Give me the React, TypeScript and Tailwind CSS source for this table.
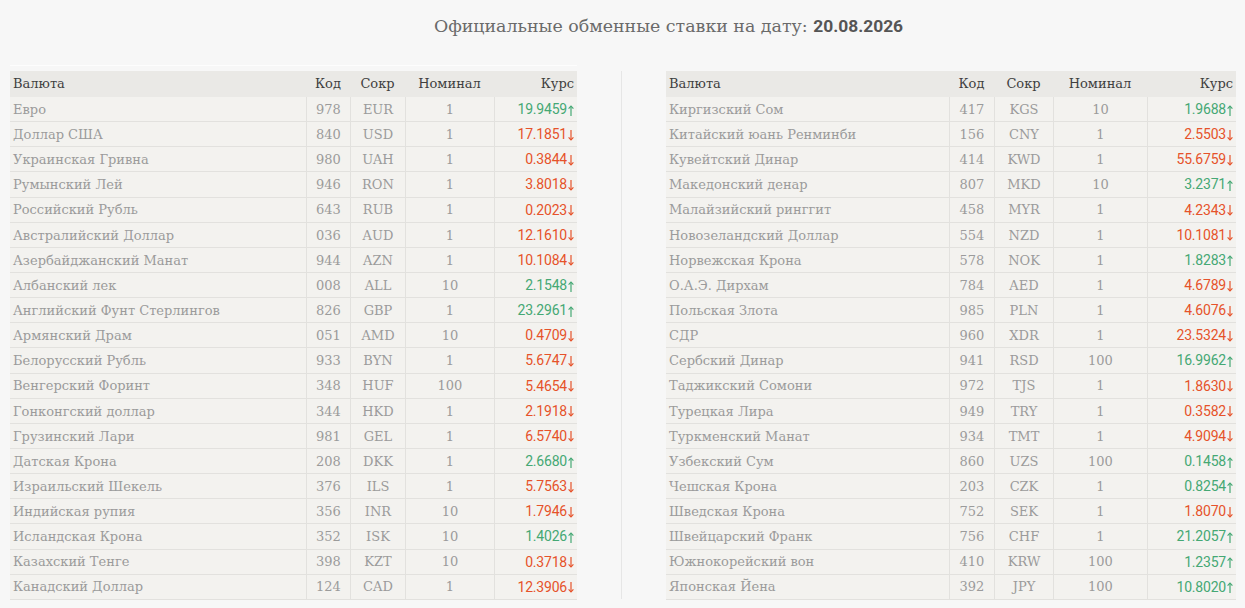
import React from "react";

type Row = [string, string, string, string, string, boolean];

const left: Row[] = [
  ["Евро", "978", "EUR", "1", "19.9459", true],
  ["Доллар США", "840", "USD", "1", "17.1851", false],
  ["Украинская Гривна", "980", "UAH", "1", "0.3844", false],
  ["Румынский Лей", "946", "RON", "1", "3.8018", false],
  ["Российский Рубль", "643", "RUB", "1", "0.2023", false],
  ["Австралийский Доллар", "036", "AUD", "1", "12.1610", false],
  ["Азербайджанский Манат", "944", "AZN", "1", "10.1084", false],
  ["Албанский лек", "008", "ALL", "10", "2.1548", true],
  ["Английский Фунт Стерлингов", "826", "GBP", "1", "23.2961", true],
  ["Армянский Драм", "051", "AMD", "10", "0.4709", false],
  ["Белорусский Рубль", "933", "BYN", "1", "5.6747", false],
  ["Венгерский Форинт", "348", "HUF", "100", "5.4654", false],
  ["Гонконгский доллар", "344", "HKD", "1", "2.1918", false],
  ["Грузинский Лари", "981", "GEL", "1", "6.5740", false],
  ["Датская Крона", "208", "DKK", "1", "2.6680", true],
  ["Израильский Шекель", "376", "ILS", "1", "5.7563", false],
  ["Индийская рупия", "356", "INR", "10", "1.7946", false],
  ["Исландская Крона", "352", "ISK", "10", "1.4026", true],
  ["Казахский Тенге", "398", "KZT", "10", "0.3718", false],
  ["Канадский Доллар", "124", "CAD", "1", "12.3906", false],
];

const right: Row[] = [
  ["Киргизский Сом", "417", "KGS", "10", "1.9688", true],
  ["Китайский юань Ренминби", "156", "CNY", "1", "2.5503", false],
  ["Кувейтский Динар", "414", "KWD", "1", "55.6759", false],
  ["Македонский денар", "807", "MKD", "10", "3.2371", true],
  ["Малайзийский ринггит", "458", "MYR", "1", "4.2343", false],
  ["Новозеландский Доллар", "554", "NZD", "1", "10.1081", false],
  ["Норвежская Крона", "578", "NOK", "1", "1.8283", true],
  ["О.А.Э. Дирхам", "784", "AED", "1", "4.6789", false],
  ["Польская Злота", "985", "PLN", "1", "4.6076", false],
  ["СДР", "960", "XDR", "1", "23.5324", false],
  ["Сербский Динар", "941", "RSD", "100", "16.9962", true],
  ["Таджикский Сомони", "972", "TJS", "1", "1.8630", false],
  ["Турецкая Лира", "949", "TRY", "1", "0.3582", false],
  ["Туркменский Манат", "934", "TMT", "1", "4.9094", false],
  ["Узбекский Сум", "860", "UZS", "100", "0.1458", true],
  ["Чешская Крона", "203", "CZK", "1", "0.8254", true],
  ["Шведская Крона", "752", "SEK", "1", "1.8070", false],
  ["Швейцарский Франк", "756", "CHF", "1", "21.2057", true],
  ["Южнокорейский вон", "410", "KRW", "100", "1.2357", true],
  ["Японская Йена", "392", "JPY", "100", "10.8020", true],
];

const serif = "font-['DejaVu_Serif',serif]";

function Arrow({ up }: { up: boolean }) {
  return (
    <svg width="6" height="11" viewBox="0 0 6 11" className="ml-[1px] mt-[1px]" fill="none" stroke="currentColor" strokeWidth="1.2">
      {up ? (
        <>
          <path d="M3 1.2V11" />
          <path d="M0.6 3.6L3 1.2L5.4 3.6" />
        </>
      ) : (
        <>
          <path d="M3 0V9.8" />
          <path d="M0.6 7.4L3 9.8L5.4 7.4" />
        </>
      )}
    </svg>
  );
}

function Table({ rows, cols }: { rows: Row[]; cols: string }) {
  return (
    <div className={`flex flex-col text-[13px] ${serif}`}>
      <div className={`grid ${cols} h-[26px] items-center bg-[#eae9e6] text-[#3f3f3f]`}>
        <div className="pl-[3px]">Валюта</div>
        <div className="text-center">Код</div>
        <div className="text-center">Сокр</div>
        <div className="text-center">Номинал</div>
        <div className="text-right pr-[3px]">Курс</div>
      </div>
      {rows.map((r) => (
        <div
          key={r[2]}
          className={`grid ${cols} h-[25.15px] bg-[#f3f2ef] border-b border-[#e2e1de] text-[#9b9b9b]`}
        >
          <div className="pl-[3px] pt-[1px] flex items-center whitespace-nowrap">{r[0]}</div>
          <div className="border-l border-[#e2e1de] pt-[1px] flex items-center justify-center">{r[1]}</div>
          <div className="border-l border-[#e2e1de] pt-[1px] flex items-center justify-center">{r[2]}</div>
          <div className="border-l border-[#e2e1de] pt-[1px] flex items-center justify-center">{r[3]}</div>
          <div
            className={`border-l border-[#e2e1de] pt-[1px] flex items-center justify-end pr-[3px] font-['Roboto',sans-serif] text-[14px] tracking-[-0.2px] ${
              r[5] ? "text-[#45a874]" : "text-[#e6522a]"
            }`}
          >
            <span>{r[4]}</span>
            <Arrow up={r[5]} />
          </div>
        </div>
      ))}
    </div>
  );
}

export default function App() {
  return (
    <div className="w-[1245px] h-[608px] bg-[#f7f7f7] overflow-hidden">
      <div className={`h-[52px] flex items-center justify-center pl-[92px] text-[17.4px] text-[#6a6a6a] ${serif}`}>
        <span>
          Официальные обменные ставки на дату:{" "}
          <b className="font-['Roboto',sans-serif] font-bold text-[#555]">20.08.2026</b>
        </span>
      </div>
      <div className="h-[1px] mt-[13px] ml-[10px] w-[567px] bg-[#fdfdfd]" />
      <div className="flex pl-[10px] pt-[5px]">
        <div className="w-[567px]">
          <Table rows={left} cols="grid-cols-[296px_44px_55px_89px_83px]" />
        </div>
        <div className="w-[89px] flex justify-center">
          <div className="w-px bg-[#e6e6e6] h-[528px]" />
        </div>
        <div className="w-[570px]">
          <Table rows={right} cols="grid-cols-[283px_45px_59px_94px_89px]" />
        </div>
      </div>
    </div>
  );
}
